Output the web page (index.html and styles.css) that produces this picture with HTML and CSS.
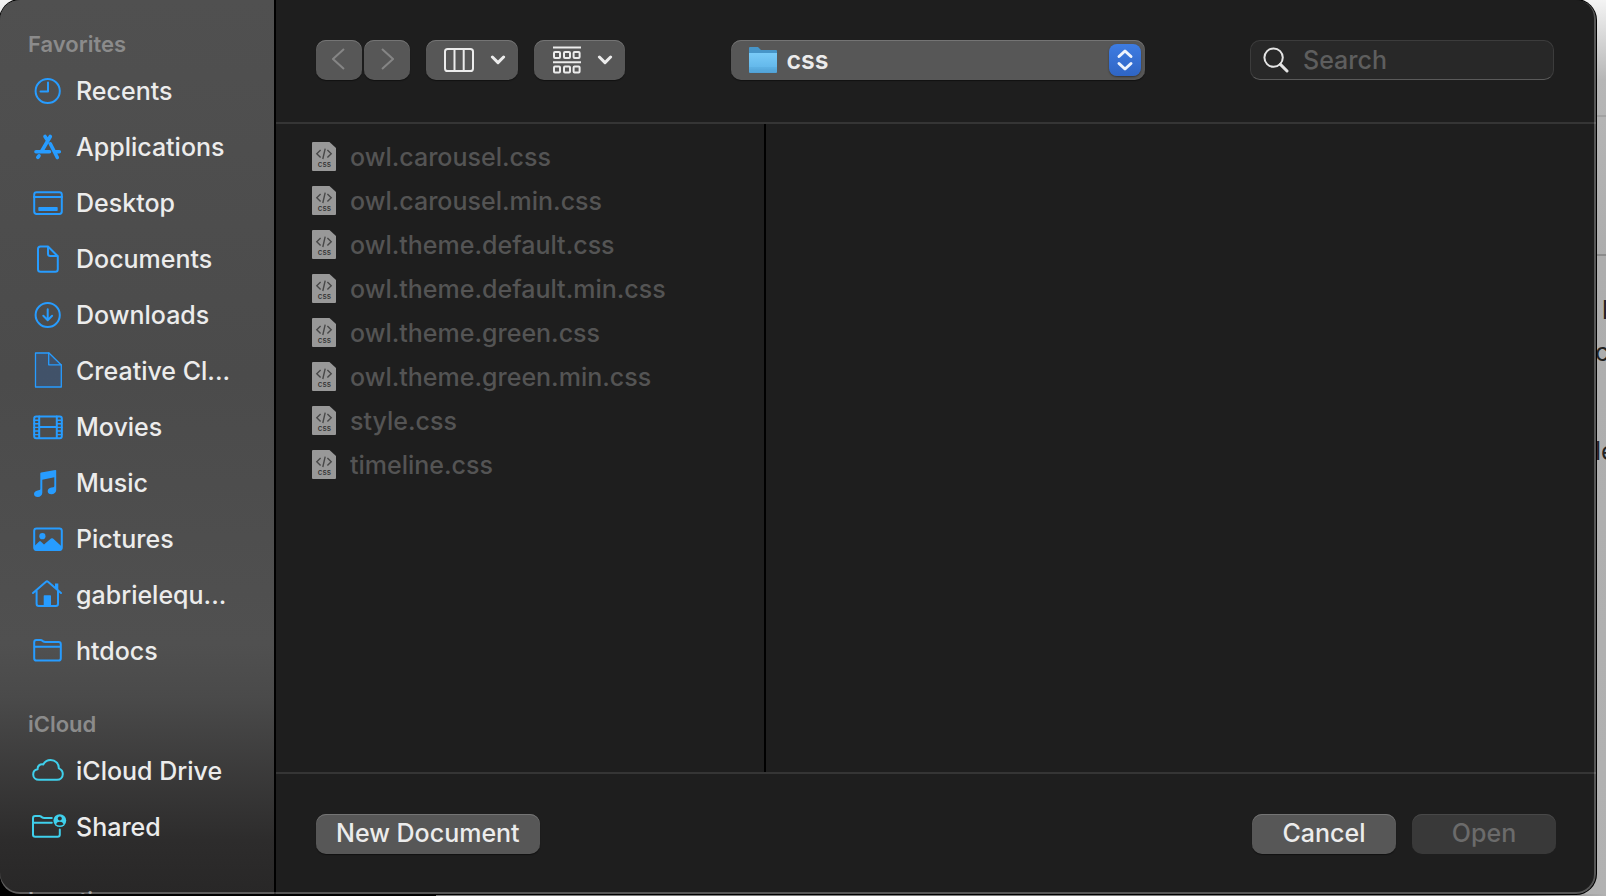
FILE: index.html
```html
<!DOCTYPE html>
<html lang="en">
<head>
    <meta charset="UTF-8">
    <title>Open</title>
    <link rel="stylesheet" href="styles.css">
</head>
<body>
    <!-- page behind the dialog -->
    <div class="backdrop">
        <span class="behind behind-1">l</span>
        <span class="behind behind-2">c</span>
        <span class="behind behind-3">le</span>
    </div>

    <div class="dialog" role="dialog" aria-label="Open">
        <nav class="sidebar">
            <h2>Favorites</h2>
            <ul>
                <li><a href="#recents">
                    <svg viewBox="0 0 40 40"><circle cx="19.7" cy="20" r="12.1"/><path d="M20 11.5V20.5H12.5"/></svg>
                    <span>Recents</span></a></li>
                <li><a href="#applications">
                    <svg viewBox="0 0 40 40" stroke-width="3.6"><path d="M22.3 9.5L13.8 24M17 9.5L19 12.5M22.3 16.8L29.3 30.5M8 24.7H21.5M27.5 24.7H31.3M11 28.8L9.8 30.4"/></svg>
                    <span>Applications</span></a></li>
                <li><a href="#desktop">
                    <svg viewBox="0 0 40 40"><rect x="6.2" y="9.2" width="27.6" height="21.8" rx="2.4"/><path d="M6 14H34"/><rect class="solid" x="10.3" y="24" width="19.4" height="4" rx="0.8"/></svg>
                    <span>Desktop</span></a></li>
                <li><a href="#documents">
                    <svg viewBox="0 0 40 40"><path d="M20 7.5H12.5Q10 7.5 10 10V30.3Q10 32.8 12.5 32.8H27.3Q29.8 32.8 29.8 30.3V17.3ZM20 7.5V14.8Q20 17 22.2 17H29.8"/></svg>
                    <span>Documents</span></a></li>
                <li><a href="#downloads">
                    <svg viewBox="0 0 40 40"><circle cx="19.7" cy="20" r="12.1"/><path d="M19.7 14.3V25M15.3 20.8L19.7 25.2L24.1 20.8"/></svg>
                    <span>Downloads</span></a></li>
                <li><a href="#creative">
                    <svg viewBox="0 0 40 40" stroke-width="1.3"><path d="M7.5 2H21L33.3 14V36H7.5Z" fill="#1e6fd8" fill-opacity=".22"/><path d="M20.7 2V13.8H33.3"/></svg>
                    <span>Creative Cl...</span></a></li>
                <li><a href="#movies">
                    <svg viewBox="0 0 40 40"><rect x="6.2" y="9.6" width="27.6" height="21.6" rx="2"/><path d="M11.2 9.6V31M28.8 9.6V31M11.2 20H28.8"/><path stroke-width="1.4" d="M6 13.2H11M6 16.8H11M6 20.4H11M6 24H11M6 27.6H11M29 13.2H34M29 16.8H34M29 20.4H34M29 24H34M29 27.6H34"/></svg>
                    <span>Movies</span></a></li>
                <li><a href="#music">
                    <svg viewBox="0 0 40 40"><path class="solid" d="M12.3 10.6Q12.3 9.8 13.2 9.6L27.3 6.9Q28.2 6.8 28.2 7.6V27C28.2 29.6 26 31.2 23.4 31.2C21.2 31.2 19.7 30 19.7 28.2C19.7 26.2 21.2 25 23.4 24.6L25.4 24.2Q26.3 24 26.3 23.1V14.3L14.3 16.8V29.8C14.3 32.4 12.2 34 9.8 34C7.5 34 6 32.8 6 31C6 29 7.5 27.8 9.6 27.4L11.4 27Q12.3 26.8 12.3 25.9Z"/></svg>
                    <span>Music</span></a></li>
                <li><a href="#pictures">
                    <svg viewBox="0 0 40 40"><rect x="6.2" y="9.4" width="27.6" height="21.6" rx="2.4"/><circle class="solid" cx="14.4" cy="17.2" r="3.1"/><path class="solid" d="M6 27.4L11.2 22.4Q12 21.8 12.8 22.4L16 25.4L23 19.6Q24 18.9 25 19.6L34 27.8V30Q34 31.5 32 31.5H8Q6 31.5 6 30Z"/></svg>
                    <span>Pictures</span></a></li>
                <li><a href="#home">
                    <svg viewBox="0 0 40 40"><path d="M5 18L18 6.8Q19 6 20 6.8L33 18M8.6 16V28.8Q8.6 31 10.8 31H27.8Q30 31 30 28.8V16"/><path class="solid" d="M27 8.5H30.3V15.5L27 12.5ZM15.7 21Q15.7 20.3 16.4 20.3H22.3Q23 20.3 23 21V31H15.7Z"/></svg>
                    <span>gabrielequ...</span></a></li>
                <li><a href="#htdocs">
                    <svg viewBox="0 0 40 40"><path d="M6.2 27.2V11.2Q6.2 9 8.4 9H12.5Q13.6 9 14.4 9.8L15.2 10.4Q16 11 17.2 11H30.6Q32.8 11 32.8 13.2V27.2Q32.8 29.6 30.6 29.6H8.4Q6.2 29.6 6.2 27.2ZM6.2 15.8H32.8"/></svg>
                    <span>htdocs</span></a></li>
            </ul>

            <h2>iCloud</h2>
            <ul class="cloud">
                <li><a href="#icloud-drive">
                    <svg viewBox="0 0 40 40"><path d="M11 28.8C7.6 28.8 5.2 26.4 5.2 23.4C5.2 20.6 7.2 18.6 9.6 18.2C9.4 15 11.8 12.8 15.2 13.4C16.8 10.6 19.4 9 22.6 9C27.4 9 31 12.6 30.8 17.4C33.2 18.4 34.8 20.4 34.8 23C34.8 26.4 32.2 28.8 29 28.8Z"/></svg>
                    <span>iCloud Drive</span></a></li>
                <li><a href="#shared">
                    <svg viewBox="0 0 40 40"><path d="M23.8 11H16.2Q15 11 14.2 10.4L13.2 9.6Q12.4 9 11.4 9H7.2Q5 9 5 11.2V27.6Q5 29.8 7.2 29.8H29.6Q31.8 29.8 31.8 27.6V22.4M5 15.8H23.8"/><circle class="solid" cx="31.8" cy="13.6" r="6.4"/><circle class="person" cx="31.8" cy="11.6" r="2"/><path class="person" d="M28 17.2Q29 14.8 31.8 14.8T35.6 17.2Q34 18.6 31.8 18.6T28 17.2Z"/></svg>
                    <span>Shared</span></a></li>
            </ul>

            <h2>Locations</h2>
        </nav>

        <main class="main">
            <header class="toolbar">
                <div class="tools">
                    <div class="history">
                        <button class="btn" aria-label="Back" disabled>
                            <svg width="14" height="24" viewBox="0 0 14 24"><path d="M12 1L1 11L12 21"/></svg>
                        </button>
                        <button class="btn" aria-label="Forward" disabled>
                            <svg width="14" height="24" viewBox="0 0 14 24"><path d="M2 1L13 11L2 21"/></svg>
                        </button>
                    </div>
                    <button class="btn view" aria-label="Column view">
                        <svg width="30" height="24" viewBox="0 0 30 24"><rect x="1" y="1" width="28" height="22" rx="2.6"/><path d="M10.5 1V23M19.7 1V23"/></svg>
                        <svg class="chevron" width="16" height="10" viewBox="0 0 16 10"><path d="M2.4 2L8 7.6L13.6 2"/></svg>
                    </button>
                    <button class="btn view" aria-label="Group items">
                        <svg width="28" height="28" viewBox="0 0 28 28"><path d="M0 1.5H28M0 16.2H28"/><rect x="1" y="6" width="6" height="6" rx="1"/><rect x="11" y="6" width="6" height="6" rx="1"/><rect x="20.6" y="6" width="6" height="6" rx="1"/><rect x="1" y="20.6" width="6" height="6" rx="1"/><rect x="11" y="20.6" width="6" height="6" rx="1"/><rect x="20.6" y="20.6" width="6" height="6" rx="1"/></svg>
                        <svg class="chevron" width="16" height="10" viewBox="0 0 16 10"><path d="M2.4 2L8 7.6L13.6 2"/></svg>
                    </button>
                </div>

                <div class="path">
                    <svg class="folder" width="30" height="28" viewBox="0 0 30 28">
                        <defs>
                            <linearGradient id="folder-fill" x1="0" y1="0" x2="0" y2="1">
                                <stop offset="0" stop-color="#7acbf8"/>
                                <stop offset=".75" stop-color="#62b7ea"/>
                                <stop offset="1" stop-color="#4f9fd4"/>
                            </linearGradient>
                        </defs>
                        <path d="M1 2Q1 1 2 1H10L13 4H28Q29 4 29 5V12H1Z" fill="#4795c8"/>
                        <path d="M1 7H29V26Q29 27 28 27H2Q1 27 1 26Z" fill="url(#folder-fill)"/>
                        <path d="M1 22H29M1 24H29" stroke="#4d9dd2" stroke-width=".6"/>
                    </svg>
                    <select aria-label="Folder">
                        <option>css</option>
                    </select>
                    <span class="stepper">
                        <svg width="18" height="24" viewBox="0 0 18 24"><path d="M3 8.5L9 3L15 8.5M3 15.5L9 21L15 15.5"/></svg>
                    </span>
                </div>

                <label class="search">
                    <svg width="26" height="26" viewBox="0 0 26 26"><circle cx="10.6" cy="10.6" r="9.2"/><path d="M17.4 17.4L24 24" stroke-width="3"/></svg>
                    <input type="search" placeholder="Search" aria-label="Search">
                </label>
            </header>

            <div class="columns">
                <ul class="files">
                    <li><svg><use href="#css-file"/></svg>owl.carousel.css</li>
                    <li><svg><use href="#css-file"/></svg>owl.carousel.min.css</li>
                    <li><svg><use href="#css-file"/></svg>owl.theme.default.css</li>
                    <li><svg><use href="#css-file"/></svg>owl.theme.default.min.css</li>
                    <li><svg><use href="#css-file"/></svg>owl.theme.green.css</li>
                    <li><svg><use href="#css-file"/></svg>owl.theme.green.min.css</li>
                    <li><svg><use href="#css-file"/></svg>style.css</li>
                    <li><svg><use href="#css-file"/></svg>timeline.css</li>
                </ul>
                <div class="preview"></div>
            </div>

            <footer class="actions">
                <button class="btn new">New Document</button>
                <button class="btn">Cancel</button>
                <button class="btn" disabled>Open</button>
            </footer>
        </main>
    </div>

    <svg class="sprite">
        <symbol id="css-file" viewBox="0 0 24 29">
            <path d="M0 1Q0 0 1 0H17.5L24 6V28Q24 29 23 29H1Q0 29 0 28Z" fill="#989898"/>
            <path d="M8.6 8L4.8 11.7L8.6 15.4M15.4 8L19.2 11.7L15.4 15.4M13.2 6.6L10.8 17" fill="none" stroke="#484848" stroke-width="1.4"/>
            <text x="12.4" y="24.6" text-anchor="middle" class="ext">css</text>
        </symbol>
    </svg>
</body>
</html>
```
FILE: styles.css
```css
:root {
    --window: #1e1e1e;
    --line: #353535;
    --button: #575757;
    --blue: #279cff;
    --cyan: #3fd0ec;
    --text: #ececec;
}

* {
    box-sizing: border-box;
}

body {
    margin: 0;
    height: 100vh;
    overflow: hidden;
    font-family: Inter, 'Liberation Sans', sans-serif;
    font-size: 25px;
    font-weight: 500;
    color: var(--text);
}

svg {
    fill: none;
    flex: none;
}

.sprite {
    position: absolute;
    width: 0;
    height: 0;
}

/* page behind the dialog */
.backdrop {
    position: absolute;
    inset: 0;
    overflow: hidden;
    color: #222;
    background:
        linear-gradient(#8c8c8c, #8c8c8c) 0 254px / 100% 2px no-repeat,
        linear-gradient(#a2a2a2, #a2a2a2) 0 115px / 100% 2px no-repeat,
        linear-gradient(90deg, #000 436px, transparent 436px) 0 100% / 100% 60px no-repeat,
        linear-gradient(90deg, #777 95%, transparent) 0 100% / 100% 2px no-repeat,
        linear-gradient(#f4f4f4, #b6b6b6 80px, #adadad 260px, #b2b2b2);
}

.behind {
    position: absolute;
    left: 100%;
    font-weight: 400;
    line-height: 30px;
    white-space: nowrap;
}

.behind-1 {
    top: 295px;
    margin-left: -4px;
}

.behind-2 {
    top: 337px;
    margin-left: -11px;
}

.behind-3 {
    top: 436px;
    margin-left: -11px;
}

.dialog {
    position: relative;
    display: flex;
    height: calc(100vh - 2px);
    margin-right: 10px;
    overflow: hidden;
    background: var(--window);
    border-radius: 20px;
    box-shadow: 0 0 0 1px #000;
}

/* light rim drawn over the contents */
.dialog::after {
    content: '';
    position: absolute;
    inset: -2px 0 0 -2px;
    border: 2px solid rgba(255, 255, 255, 0.25);
    border-radius: 22px 20px 20px 22px;
    pointer-events: none;
}

/* sidebar */
.sidebar {
    flex: none;
    width: 276px;
    padding-top: 25px;
    overflow: hidden;
    border-right: 2px solid #000;
    background: linear-gradient(#505050, #4b4b4b 42%, #505050 72%, #4a4a4a 78%, #2d2c2c 94%, #282727);
}

.sidebar h2 {
    margin: 0;
    padding-left: 28px;
    font-size: 22px;
    font-weight: 600;
    line-height: 38px;
    color: #8b8b8b;
}

.sidebar ul {
    margin: 0 0 26px;
    padding: 0;
    list-style: none;
    color: var(--blue);
}

.sidebar .cloud {
    color: var(--cyan);
}

.sidebar a {
    display: flex;
    align-items: center;
    gap: 8px;
    height: 56px;
    padding-left: 28px;
    color: inherit;
    text-decoration: none;
}

.sidebar a span {
    color: var(--text);
    white-space: nowrap;
}

.sidebar svg {
    width: 40px;
    height: 40px;
    stroke: currentColor;
    stroke-linecap: round;
    stroke-linejoin: round;
}

.sidebar svg:not([stroke-width]) {
    stroke-width: 2;
}

.sidebar .solid {
    fill: currentColor;
    stroke: none;
}

.sidebar .person {
    fill: #303030;
    stroke: none;
}

.main {
    flex: 1;
    min-width: 0;
    display: flex;
    flex-direction: column;
}

/* buttons */
.btn {
    display: flex;
    align-items: center;
    justify-content: center;
    min-width: 144px;
    height: 40px;
    padding: 0 20px 2px;
    border: 0;
    border-radius: 10px;
    background: var(--button);
    box-shadow: inset 0 1px 0 #747474, 0 1px 1px #111;
    font: inherit;
    color: var(--text);
}

.btn:disabled {
    background: #393939;
    box-shadow: inset 0 1px 0 #484848;
    color: #6b6b6b;
}

/* toolbar */
.toolbar {
    display: flex;
    align-items: center;
    justify-content: space-between;
    gap: 16px;
    padding: 40px 42px 42px 40px;
    border-bottom: 2px solid var(--line);
}

.tools {
    display: flex;
    gap: 16px;
}

.tools svg {
    stroke: currentColor;
    stroke-width: 2;
}

.history {
    display: flex;
    gap: 2px;
}

.history .btn {
    min-width: 46px;
    padding: 0;
    background: var(--button);
    box-shadow: inset 0 1px 0 #747474, 0 1px 1px #111;
    color: #858585;
}

.view {
    min-width: 91px;
    gap: 16px;
    padding: 0 12px 0 18px;
}

.tools .chevron {
    stroke-width: 3;
    stroke-linecap: round;
    stroke-linejoin: round;
}

.path {
    position: relative;
    flex: 0 1 414px;
}

.path select {
    appearance: none;
    display: block;
    width: 100%;
    height: 40px;
    padding: 0 48px 0 56px;
    border: 0;
    border-radius: 10px;
    background: var(--button);
    box-shadow: inset 0 1px 0 #747474, 0 1px 1px #111;
    font: inherit;
    font-weight: 600;
    color: var(--text);
}

.folder {
    position: absolute;
    left: 17px;
    top: 6px;
    pointer-events: none;
}

.stepper {
    position: absolute;
    top: 4px;
    right: 4px;
    display: grid;
    place-items: center;
    width: 32px;
    height: 32px;
    border-radius: 8px;
    background: linear-gradient(#3e7ce2, #2f65c4);
    box-shadow: 0 1px 2px rgba(0, 0, 0, 0.4);
    pointer-events: none;
}

.stepper svg {
    stroke: #eef3fc;
    stroke-width: 3;
    stroke-linecap: round;
    stroke-linejoin: round;
}

.search {
    display: flex;
    align-items: center;
    gap: 14px;
    flex: 0 1 304px;
    min-width: 0;
    height: 40px;
    padding: 0 12px;
    border: 1px solid #3c3c3c;
    border-bottom-color: #5a5a5a;
    border-radius: 10px;
    background: #282828;
}

.search svg {
    stroke: #e4e4e4;
    stroke-width: 2;
    stroke-linecap: round;
}

.search input {
    flex: 1;
    min-width: 0;
    padding: 0;
    border: 0;
    outline: 0;
    background: none;
    font: inherit;
    color: var(--text);
}

.search input::placeholder {
    color: #5e5e5e;
}

/* file columns */
.columns {
    flex: 1;
    min-height: 0;
    display: flex;
}

.files {
    flex: none;
    width: 490px;
    margin: 0;
    padding: 11px 36px;
    border-right: 2px solid #000;
    list-style: none;
    color: #545454;
}

.files li {
    display: flex;
    align-items: center;
    gap: 14px;
    height: 44px;
    white-space: nowrap;
}

.files svg {
    width: 24px;
    height: 29px;
    margin-bottom: 1px;
}

.ext {
    font-size: 8px;
    fill: #333;
}

.preview {
    flex: 1;
}

/* footer */
.actions {
    display: flex;
    gap: 16px;
    padding: 40px;
    border-top: 2px solid var(--line);
}

.actions .new {
    margin-right: auto;
}
```
